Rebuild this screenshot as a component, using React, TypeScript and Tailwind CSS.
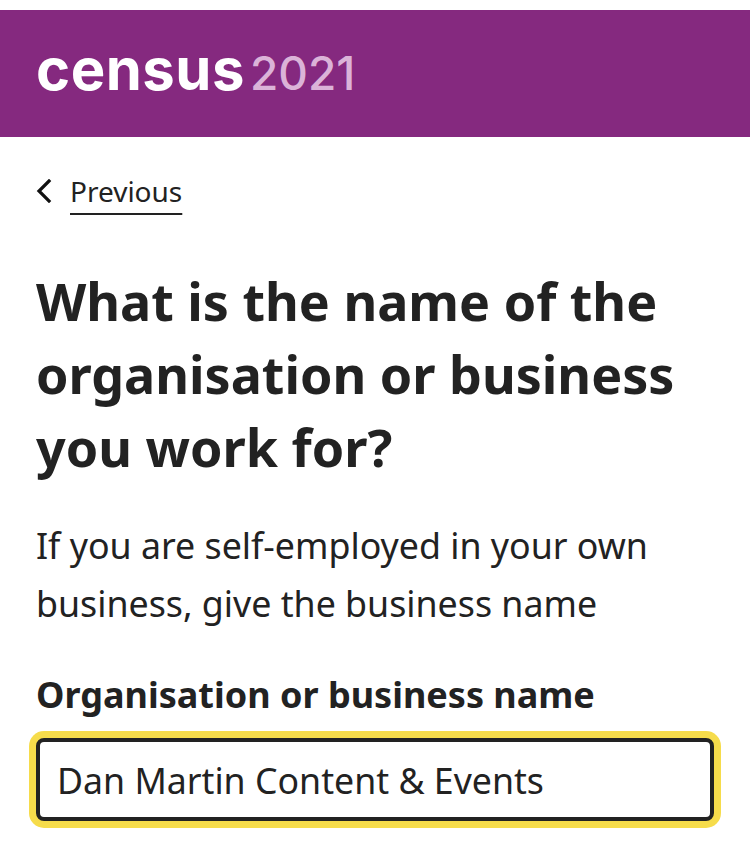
import React from "react";

// Census 2021 question page: organisation name
const ChevronLeft = () => (
  <svg width="16" height="24" viewBox="0 0 16 24" fill="none" aria-hidden="true">
    <path d="M13 2 L3 12 L13 22" stroke="#111111" strokeWidth="3.2" strokeLinecap="square" />
  </svg>
);

export default function App() {
  return (
    <div className="min-h-screen bg-white pt-[10px] font-['Noto_Sans',sans-serif] text-[#222222]">
      {/* Header */}
      <header className="flex h-[127px] items-center bg-[#85297f] px-9">
        <div className="flex items-baseline gap-[5px] pb-[10px]">
          <span className="font-['Inter',sans-serif] text-[58px] font-bold leading-none tracking-[0.5px] text-white">
            census
          </span>
          <span className="font-['Inter',sans-serif] text-[46px] font-medium leading-none text-[#dbb3d8]">
            2021
          </span>
        </div>
      </header>

      <main className="px-9">
        {/* Back link */}
        <div className="flex items-center pt-[34px]">
          <ChevronLeft />
          <a
            href="#"
            className="ml-[18px] text-[28px] leading-[40px] underline decoration-[2px] underline-offset-[11px]"
          >
            Previous
          </a>
        </div>

        <h1 className="mt-[54px] text-[52px] font-bold leading-[72.8px]">
          What is the name of the organisation or business you work for?
        </h1>

        <p className="mt-[34px] text-[35.75px] leading-[57.6px]">
          If you are self-employed in your own business, give the business name
        </p>

        <label htmlFor="org" className="mt-[33px] block text-[36px] font-bold leading-[57.6px]">
          Organisation or business name
        </label>

        <div className="mt-[15px]">
          <input
            id="org"
            type="text"
            defaultValue="Dan Martin Content & Events"
            className="block h-[83px] w-full rounded-[8px] border-4 border-[#222222] bg-white px-[17px] font-['Noto_Sans',sans-serif] text-[35.7px] text-[#222222] shadow-[0_0_0_7px_#f6dc4b] outline-none"
          />
        </div>
      </main>
    </div>
  );
}
